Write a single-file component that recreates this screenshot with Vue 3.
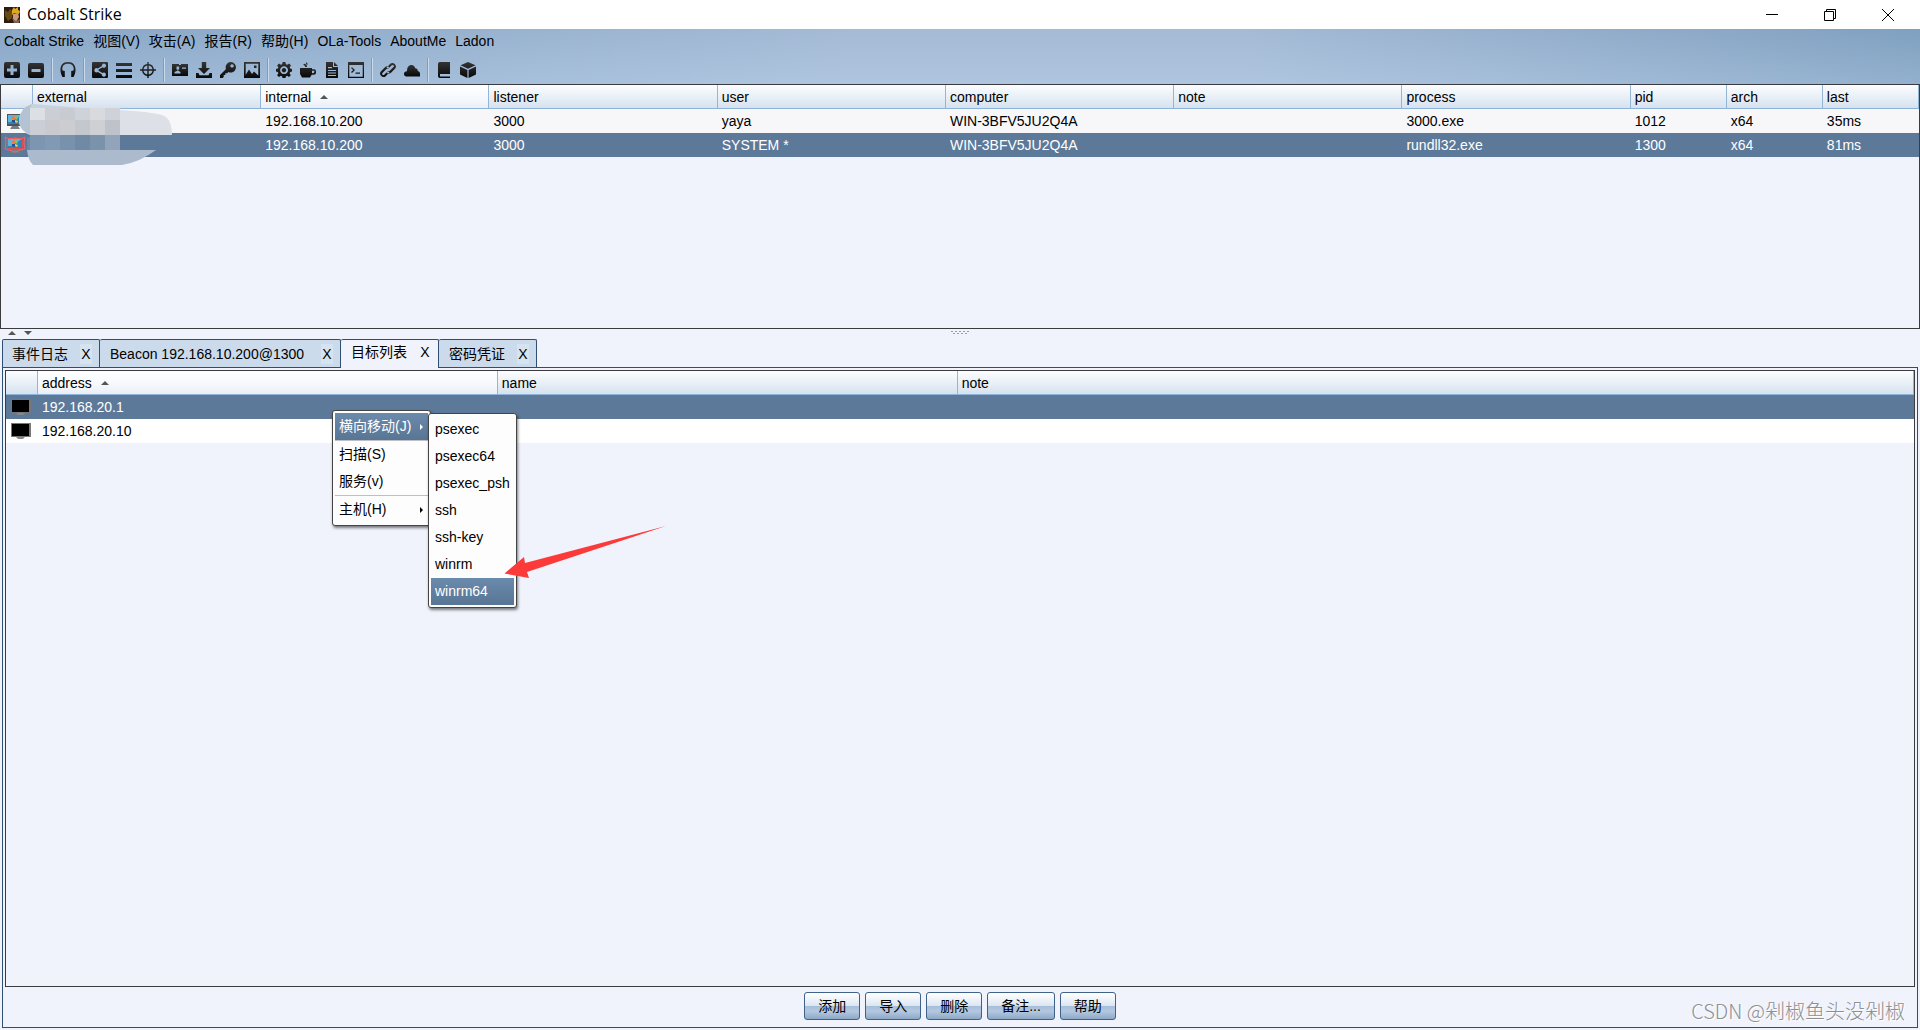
<script setup>
import { ref } from 'vue'

const menus = ['Cobalt Strike', '视图(V)', '攻击(A)', '报告(R)', '帮助(H)', 'OLa-Tools', 'AboutMe', 'Ladon']

const toolGroups = [
  [
    { label: 'New connection', rule: true, d: 'M2 0h12a2 2 0 0 1 2 2v12a2 2 0 0 1-2 2H2a2 2 0 0 1-2-2V2a2 2 0 0 1 2-2zM6.500 3v3.500H3v3h3.500V13h3V9.500H13v-3H9.500V3z' },
    { label: 'Disconnect', rule: true, d: 'M2 1h12a2 2 0 0 1 2 2v11a2 2 0 0 1-2 2H2a2 2 0 0 1-2-2V3a2 2 0 0 1 2-2zM3.500 7v3h9V7z' }
  ],
  [
    { label: 'Listeners', rule: true, d: 'M2.500 15C-1 9-.5 0 8 0s9 9 5.500 15h-2.300V9l2.300-.6C14.500 4.500 12 1.800 8 1.800S1.500 4.500 2.500 8.400L4.800 9v6z' }
  ],
  [
    { label: 'Pivot graph', rule: true, d: 'M1 0h14a1 1 0 0 1 1 1v14a1 1 0 0 1-1 1H1a1 1 0 0 1-1-1V1a1 1 0 0 1 1-1zM4.500 6a2.200 2.200 0 1 0 1.300 4l4 2.200a2.100 2.100 0 1 0 .7-1.200L6.600 8.700V7.500l4-2.200a2.100 2.100 0 1 0-.7-1.300L5.800 6.400A2.200 2.200 0 0 0 4.500 6z' },
    { label: 'Session table', d: 'M0 1h16v3H0zM0 7h16v3H0zM0 13h16v3H0z' },
    { label: 'Targets', rule: true, d: 'M7.300 0h1.400v2.100a6 6 0 0 1 5.200 5.200H16v1.400h-2.100a6 6 0 0 1-5.200 5.200V16H7.300v-2.100a6 6 0 0 1-5.200-5.200H0V7.300h2.100a6 6 0 0 1 5.200-5.200zM7.300 3.500a4.700 4.700 0 0 0-3.800 3.800h3.800zM8.700 3.500v3.800h3.800a4.700 4.700 0 0 0-3.800-3.800zM3.500 8.700a4.700 4.700 0 0 0 3.800 3.800V8.700zM8.700 8.700v3.800a4.700 4.700 0 0 0 3.800-3.800z' }
  ],
  [
    { label: 'Credentials', rule: true, d: 'M0 2h7v1h2V2h7v12H0zM4.500 4.500v3h1v1.200L2.500 10v1.500h6V10L6.200 8.700V7.500h1v-3zM10 5.500v1.300h4V5.500z' },
    { label: 'Downloads', d: 'M5.800 0h4.400v6H14l-6 6-6-6h3.800zM0 11h2.500l1 2.200h9l1-2.200H16v5H0z' },
    { label: 'Keystrokes', rule: true, d: 'M10.800 0a5.200 5.200 0 1 1-2.300 9.900L7 11.300H5.300V13H3.700v2L2.500 16H0v-3l6-6A5.200 5.200 0 0 1 10.800 0zM12 2.200a1.700 1.700 0 1 0 .1 0z' },
    { label: 'Screenshots', rule: true, d: 'M0 0h16v16H0zM1.700 1.700v11L5 7.500 8 12l2-2.500 4.300 4V1.700zM10 3.500h2.500V6H10z' }
  ],
  [
    { label: 'Payload generator', rule: true, d: 'M6.600 0h2.800l.5 2.200 1.300.6L13.100 1.500 15 3.400l-1.300 1.900.5 1.300 2 .4v2.500l-2 .5-.6 1.300 1.200 1.900-1.800 1.800-1.900-1.200-1.300.6-.4 1.900H6.600L6.200 14.400l-1.300-.6L3 15l-1.900-1.800 1.300-1.900L1.800 10-.2 9.500V7l2-.4.6-1.300L1.100 3.400 3 1.500l1.900 1.300 1.300-.6zM8 4.300a3.900 3.900 0 1 0 .1 0zM8 6a2.200 2.200 0 1 1-.1 0z' },
    { label: 'Java attack', rule: true, d: 'M0 6h12v1.200h2a2 2 0 0 1 2 2v1a2.500 2.500 0 0 1-2.500 2.500h-1.800L10 15.500H2L0 12zM12 8.700v2.500h1a1.400 1.400 0 0 0 1.400-1.400V8.700zM5 5V4L3.500 2.800V2L5 1.800l1.800 1.500V5zM6 2V0l1.500 1.600V3z' },
    { label: 'Office macro', rule: true, d: 'M2 0h7v5h5v11H2zM10 0l4 4h-4zM4 5v1.200h4V5zM4 8v1h8V8zM4 10.500v1h8v-1zM4 13v1h8v-1z' },
    { label: 'Scripted web delivery', rule: true, d: 'M0 0h16v16H0zM1.300 3v11.700h13.400V3zM3 6l1-.8L7 8l-3 3-1-.9L5.200 8zM7.500 10.500H12v1.300H7.500z' }
  ],
  [
    { label: 'Hosted files', rule: true, d: 'M6.300 6L10.500 1.600a3.500 3.500 0 0 1 4.700 5L11.300 10.500a3.500 3.500 0 0 1-4.600.3l1.700-1.700a1.400 1.400 0 0 0 1.400-.4l3.700-3.700a1.200 1.200 0 0 0-1.700-1.700L8.500 6.600zM9.700 10L5.500 14.400a3.500 3.500 0 0 1-4.700-5L4.700 5.500a3.500 3.500 0 0 1 4.600-.3L7.600 6.900a1.400 1.400 0 0 0-1.400.4L2.500 11a1.200 1.200 0 0 0 1.700 1.700L7.500 9.400z' },
    { label: 'Cloud files', d: 'M2 14.500a2.500 2.500 0 0 1-2-2.700c0-1.800 1.500-2.800 3-2.600C3 5.500 4.500 3 7.500 3c2 0 3.400 1.500 3.700 3.200 1.500 0 2.600 1 2.600 2.800a2.800 2.800 0 0 1 2.200 3v2.500z' }
  ],
  [
    { label: 'Help', rule: true, d: 'M3.500 0H14v12H4v2.500h10V16H3.500A2 2 0 0 1 2 14V2a2 2 0 0 1 1.500-2z' },
    { label: 'About', rule: true, d: 'M8 0l7.500 3.300L8 6.800.5 3.300zM0 4.500l7.400 3.400V16L0 12.500zM16 4.500L8.600 7.900V16L16 12.500z' }
  ]
]

const sessionCols = ['external', 'internal', 'listener', 'user', 'computer', 'note', 'process', 'pid', 'arch', 'last']
const sessions = [
  { admin: false, cells: ['', '192.168.10.200', '3000', 'yaya', 'WIN-3BFV5JU2Q4A', '', '3000.exe', '1012', 'x64', '35ms'] },
  { admin: true, cells: ['', '192.168.10.200', '3000', 'SYSTEM *', 'WIN-3BFV5JU2Q4A', '', 'rundll32.exe', '1300', 'x64', '81ms'] }
]
const selectedSession = ref(1)

const tabs = [
  { title: '事件日志' },
  { title: 'Beacon 192.168.10.200@1300', console: true },
  { title: '目标列表' },
  { title: '密码凭证' }
]
const activeTab = ref(2)

const targets = ['192.168.20.1', '192.168.20.10']
const selectedTarget = ref(0)

const jumpMethods = ['psexec', 'psexec64', 'psexec_psh', 'ssh', 'ssh-key', 'winrm', 'winrm64']
const actions = ['添加', '导入', '删除', '备注...', '帮助']

const mosaic = [
  ['#dcdfe4', '#cbcfd5', '#c8ccd2', '#ced3d9', '#d8dade', '#cfd3d9'],
  ['#cbced5', '#c8cacf', '#cbcdd0', '#c4c8ce', '#ced0d4', '#bec3cb'],
  ['#7c96b2', '#8199b3', '#7891ac', '#7089a5', '#7b92ab', '#91a4b9']
]
</script>

<template>
  <div class="window">
    <header class="titlebar">
      <svg class="logo" viewBox="0 0 16 16" aria-hidden="true">
        <rect width="16" height="16" fill="#2a1c10" />
        <path d="M1 3l3 2 2-3 3 3-1 6-4 3-3-5z" fill="#6b4a12" />
        <path d="M8 3l2-3 1 2 3-2v3l2 1-1 3-5-1-2 2z" fill="#e0a81c" />
        <path d="M9 7l5-1 1 4-3 5-3-3z" fill="#c99a7c" />
        <path d="M8 11l2 5h5l1-4-4 2z" fill="#80604e" />
      </svg>
      <h1>Cobalt Strike</h1>
      <div class="controls">
        <button aria-label="Minimize"><svg viewBox="0 0 12 12"><path d="M0 5.500h12" /></svg></button>
        <button aria-label="Restore"><svg viewBox="0 0 12 12"><path d="M.5 2.500h9v9h-9zM2.500 2.500v-2h9v9h-2" /></svg></button>
        <button aria-label="Close"><svg viewBox="0 0 12 12"><path d="M0 0l12 12M12 0L0 12" /></svg></button>
      </div>
    </header>

    <div class="chrome">
      <nav class="menubar">
        <button v-for="m in menus" :key="m">{{ m }}</button>
      </nav>
      <div class="toolbar" role="toolbar">
        <div v-for="(group, g) in toolGroups" :key="g" class="group">
          <button v-for="t in group" :key="t.label" :aria-label="t.label">
            <svg viewBox="0 0 16 16"><path :d="t.d" fill="url(#ink)" :fill-rule="t.rule ? 'evenodd' : 'nonzero'" /></svg>
          </button>
        </div>
      </div>
      <svg class="defs" aria-hidden="true">
        <defs>
          <linearGradient id="ink" x1="0" y1="0" x2="0" y2="1">
            <stop offset="0" stop-color="#343434" />
            <stop offset="1" stop-color="#080808" />
          </linearGradient>
        </defs>
      </svg>
    </div>

    <section class="sessions">
      <table>
        <thead>
          <tr>
            <th class="icon"></th>
            <th v-for="(c, i) in sessionCols" :key="c" :class="{ wide: i < 7, sorted: c === 'internal' }">
              {{ c }}<i v-if="c === 'internal'" class="up"></i>
            </th>
          </tr>
        </thead>
        <tbody>
          <tr v-for="(s, i) in sessions" :key="i" :class="{ selected: selectedSession === i }" @click="selectedSession = i">
            <td class="icon">
              <svg class="host" viewBox="0 0 22 18" aria-hidden="true">
                <path d="M3 2h16v12H3z" :fill="s.admin ? '#d9505c' : '#4b545c'" />
                <path d="M4 3h14v9H4z" fill="#2f83b5" />
                <path d="M4 3h14L7 10H4z" fill="#5eb5dc" />
                <path d="M8 5l3-1v3H8z" fill="#ec7b3c" />
                <path d="M11 4l3 1-1 3-2-1z" fill="#83c45a" />
                <path d="M8 8h3v3l-3-1z" fill="#234f91" />
                <path d="M11 8l3 1-1 2-2-1z" fill="#f2cc4c" />
                <path d="M8 14h6l2 3H6z" fill="#777f86" />
                <path v-if="s.admin" d="M1 1l4 2 6-1 6 1 4-2-1 6 1 6-4 1-6 2-6-2-4-1 1-6z" fill="none" stroke="#f0636c" />
              </svg>
            </td>
            <td v-for="(v, k) in s.cells" :key="k">{{ v }}</td>
          </tr>
        </tbody>
      </table>
      <svg class="redaction" width="160" height="64" viewBox="16 102 160 64" aria-hidden="true">
        <path d="M19 120Q20 108 32 104L82 108Q160 111 166 117 172 122 172 135H30Q19 131 19 120z" fill="#dee0e8" />
        <path d="M19 120Q20 108 32 104V135Q19 131 19 120z" fill="#b4c3d3" />
        <path d="M32 104L82 108H30z" fill="#c5d2df" />
        <path d="M27 138l7-3v15h-7z" fill="#6d88a6" />
        <template v-for="(line, r) in mosaic" :key="r">
          <rect v-for="(c, k) in line" :key="k" :x="30 + k * 15" :y="[108, 120, 135][r]" width="15" :height="r ? 15 : 12" :fill="c" />
        </template>
        <path d="M27 150H156Q140 162 122 165H33Q28 160 27 150z" fill="#abbbcd" />
      </svg>
    </section>

    <div class="splitter">
      <div class="arrows"><i class="up"></i><i class="down"></i></div>
      <span class="grip"></span>
    </div>

    <div class="tabs" role="tablist">
      <div v-for="(t, i) in tabs" :key="t.title" class="tab" :class="{ active: activeTab === i, console: t.console }">
        <button class="name" role="tab" :aria-selected="activeTab === i" @click="activeTab = i">{{ t.title }}</button>
        <button class="close" :aria-label="'Close ' + t.title">X</button>
      </div>
    </div>

    <main class="panel">
      <div class="targets">
        <table>
          <thead>
            <tr>
              <th class="icon"></th>
              <th class="quarter sorted">address<i class="up"></i></th>
              <th class="quarter">name</th>
              <th>note</th>
            </tr>
          </thead>
          <tbody>
            <tr v-for="(t, i) in targets" :key="t" :class="{ selected: selectedTarget === i }" @click="selectedTarget = i">
              <td class="icon">
                <svg class="screen" viewBox="0 0 20 16" aria-hidden="true">
                  <path d="M0 0h20v14H0z" fill="#777" />
                  <path d="M1 1h17v12H1z" fill="#000" />
                  <path d="M5 14h9l-2 2H7z" fill="#888" />
                </svg>
              </td>
              <td>{{ t }}</td>
              <td></td>
              <td></td>
            </tr>
          </tbody>
        </table>
      </div>
      <div class="actions">
        <button v-for="a in actions" :key="a">{{ a }}</button>
      </div>
    </main>

    <div class="popup context" role="menu">
      <button class="hot" role="menuitem">横向移动(J)<i class="more"></i></button>
      <hr />
      <button role="menuitem">扫描(S)</button>
      <button role="menuitem">服务(v)</button>
      <hr />
      <button role="menuitem">主机(H)<i class="more"></i></button>
    </div>
    <div class="popup submenu" role="menu">
      <button v-for="j in jumpMethods" :key="j" role="menuitem" :class="{ hot: j === 'winrm64' }">{{ j }}</button>
    </div>

    <svg class="pointer" width="164" height="54" viewBox="504 525 164 54" aria-hidden="true">
      <path d="M504.500 573.500L524 557l1 6 141-37-139 46 2 6z" fill="#fc3a3a" />
    </svg>

    <div class="watermark">CSDN @剁椒鱼头没剁椒</div>
  </div>
</template>

<style>
body {
  margin: 0;
}
</style>

<style scoped>
.window {
  position: relative;
  display: flex;
  flex-direction: column;
  box-sizing: border-box;
  min-height: 100vh;
  padding-bottom: 2px;
  background: #f0f3fb;
  color: #000;
  font: 14px/24px "Liberation Sans", "Noto Sans CJK SC", sans-serif;
}
button {
  padding: 0;
  border: 0;
  background: none;
  color: inherit;
  font: inherit;
  white-space: nowrap;
}
svg {
  display: block;
}

.titlebar {
  display: flex;
  align-items: center;
  height: 29px;
  padding-left: 4px;
  background: #fff;
}
.logo {
  width: 16px;
  height: 16px;
}
h1 {
  flex: 1;
  margin: 0 0 0 7px;
  font: 16px/26px "Open Sans", sans-serif;
  height: 28px;
}
.controls {
  display: flex;
  padding-right: 3px;
}
.controls button {
  display: grid;
  place-items: center;
  width: 58px;
  height: 28px;
}
.controls svg {
  width: 12px;
  height: 12px;
  fill: none;
  stroke: #000;
}

.chrome {
  height: 55px;
  background:
    linear-gradient(rgba(120, 150, 185, 0.1), rgba(190, 215, 240, 0.3)),
    linear-gradient(90deg, #8aa8c8, #9bb5d1 25%, #a9bed8 44%, #a9bed8 65%, #8fabc9 88%, #80a1c0);
}
.menubar {
  display: flex;
  gap: 9px;
  height: 27px;
  padding-left: 4px;
}
.menubar button {
  height: 24px;
}
.toolbar {
  display: flex;
  height: 28px;
}
.group {
  display: flex;
}
.group + .group::before {
  content: "";
  width: 1px;
  height: 24px;
  margin: 2px 3px;
  background: #7f9dbf;
  border-right: 1px solid #c9d9e9;
}
.group button {
  display: grid;
  place-items: center;
  width: 24px;
  height: 28px;
}
.group svg {
  width: 16px;
  height: 16px;
}
.defs {
  position: absolute;
  width: 0;
  height: 0;
}

table {
  width: 100%;
  table-layout: fixed;
  border-collapse: separate;
  border-spacing: 0;
}
th,
td {
  box-sizing: border-box;
  height: 24px;
  padding: 0 0 0 4px;
  line-height: 23px;
  font-weight: 400;
  text-align: left;
  white-space: nowrap;
}
th {
  padding-top: 1px;
  line-height: 22px;
  border-right: 1px solid #94b5d6;
  border-bottom: 1px solid #8fb3d8;
  background: linear-gradient(#fcfdff, #e9f0f7 50%, #d6e2ef);
}
th.sorted {
  background: linear-gradient(#fff, #f5f8fc 60%, #e9eff6);
}
th.icon {
  width: 32px;
}
th.wide {
  width: 11.9%;
}
th.quarter {
  width: 24.1%;
}
td {
  background: #fff;
}
td.icon {
  padding-left: 3px;
}
.sessions td {
  background: #f7f7fa;
}
tr.selected td {
  background: #5d7999;
  color: #fff;
}
.up,
.down {
  display: inline-block;
  border: 4px solid transparent;
  border-top-width: 0;
  border-bottom: 4px solid #555;
}
.down {
  border-top: 4px solid #555;
  border-bottom-width: 0;
}
th .up {
  margin: 0 0 3px 9px;
}

.sessions {
  position: relative;
  box-sizing: border-box;
  height: 245px;
  border: 1px solid #3c3c40;
}
.host {
  width: 22px;
  height: 18px;
}
.redaction {
  position: absolute;
  left: 15px;
  top: 17px;
}

.splitter {
  display: grid;
  grid-template-columns: 1fr auto 1fr;
  align-items: start;
  box-sizing: border-box;
  height: 10px;
  padding-top: 2px;
}
.arrows {
  display: flex;
  gap: 8px;
  padding-left: 8px;
}
.grip {
  width: 18px;
  height: 3px;
  background:
    repeating-linear-gradient(90deg, #9aa0aa 0 2px, transparent 2px 4px) 0 0 / 100% 1px no-repeat,
    repeating-linear-gradient(90deg, transparent 0 2px, #9aa0aa 2px 4px) 0 100% / 100% 1px no-repeat;
}

.tabs {
  position: relative;
  display: flex;
  height: 28px;
  margin: 0 2px;
}
.tab {
  display: flex;
  justify-content: space-between;
  gap: 12px;
  box-sizing: border-box;
  height: 28px;
  padding: 0 7px 0 9px;
  border: 1px solid #2f4f72;
  border-bottom: 0;
  border-radius: 2px 2px 0 0;
  background: #ccdbeb;
  line-height: 28px;
}
.tab + .tab {
  padding-left: 10px;
  border-left-width: 0;
}
.tab.console {
  min-width: 241px;
}
.tab .close {
  width: 12px;
  height: 20px;
  margin-top: 4px;
  line-height: 20px;
  background: #d6e3f1;
}
.tab.active {
  z-index: 1;
  height: 29px;
  background: #f0f3fb;
  line-height: 24px;
}
.tab.active .name {
  height: 24px;
}
.tab.active .close {
  margin-top: 2px;
  background: none;
}

.panel {
  flex: 1;
  display: flex;
  flex-direction: column;
  margin: 0 2px;
  padding: 2px;
  border: 1px solid #2f4f72;
}
.targets {
  flex: 1;
  border: 1px solid #3c3c40;
}
.screen {
  width: 20px;
  height: 16px;
  margin-left: 2px;
}
.actions {
  display: flex;
  justify-content: center;
  gap: 5px;
  padding: 5px 0;
}
.actions button {
  height: 28px;
  padding: 0 13px;
  border: 1px solid #3f6288;
  border-radius: 3px;
  background: linear-gradient(#fff, #dde7f2 48%, #a6bdd9 50%, #b4c8e0 70%, #8da9c8);
  line-height: 26px;
}

.popup {
  position: absolute;
  display: flex;
  flex-direction: column;
  box-sizing: border-box;
  padding: 2px;
  border: 1px solid #444;
  border-radius: 3px;
  background: #fdfdfe;
  box-shadow: 1px 2px 3px rgba(0, 0, 0, 0.5);
}
.context {
  left: 332px;
  top: 410px;
  width: 99px;
}
.submenu {
  left: 428px;
  top: 413px;
  width: 89px;
}
.popup button {
  display: flex;
  align-items: center;
  justify-content: space-between;
  height: 27px;
  padding: 0 5px 0 4px;
  line-height: 27px;
}
.popup .hot {
  background: linear-gradient(#6b8bad, #587594);
  color: #fff;
}
.popup hr {
  width: 100%;
  height: 1px;
  margin: 0;
  border: 0;
  background: #bfbfc3;
}
.more {
  border: 3px solid transparent;
  border-left: 3px solid currentColor;
  border-right-width: 0;
}

.pointer {
  position: absolute;
  left: 504px;
  top: 525px;
}
.watermark {
  position: absolute;
  right: 15px;
  bottom: 5px;
  color: #8e8f93;
  font-family: "Noto Sans CJK SC", sans-serif;
  font-size: 20px;
  font-weight: 300;
  line-height: 28px;
  text-shadow: 1px 1px 0 #fff;
}
</style>
